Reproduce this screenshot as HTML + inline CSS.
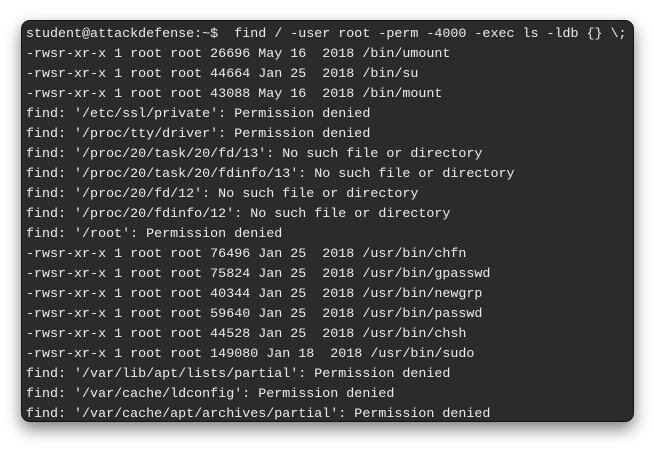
<!DOCTYPE html>
<html><head><meta charset="utf-8"><style>
html,body{margin:0;padding:0;background:#fff;width:655px;height:459px;overflow:hidden}
.win{position:absolute;left:21px;top:20px;width:611px;height:400px;background:#2b2b2b;border:1px solid #111;border-radius:9px;box-shadow:0 7px 16px rgba(0,0,0,0.5);overflow:hidden}
pre{margin:0;position:absolute;left:4px;top:4px;font-family:"Liberation Mono",monospace;font-size:13.35px;line-height:20px;color:#ececec;white-space:pre}
</style></head><body>
<div class="win"><pre>student@attackdefense:~$  find / -user root -perm -4000 -exec ls -ldb {} \;
-rwsr-xr-x 1 root root 26696 May 16  2018 /bin/umount
-rwsr-xr-x 1 root root 44664 Jan 25  2018 /bin/su
-rwsr-xr-x 1 root root 43088 May 16  2018 /bin/mount
find: '/etc/ssl/private': Permission denied
find: '/proc/tty/driver': Permission denied
find: '/proc/20/task/20/fd/13': No such file or directory
find: '/proc/20/task/20/fdinfo/13': No such file or directory
find: '/proc/20/fd/12': No such file or directory
find: '/proc/20/fdinfo/12': No such file or directory
find: '/root': Permission denied
-rwsr-xr-x 1 root root 76496 Jan 25  2018 /usr/bin/chfn
-rwsr-xr-x 1 root root 75824 Jan 25  2018 /usr/bin/gpasswd
-rwsr-xr-x 1 root root 40344 Jan 25  2018 /usr/bin/newgrp
-rwsr-xr-x 1 root root 59640 Jan 25  2018 /usr/bin/passwd
-rwsr-xr-x 1 root root 44528 Jan 25  2018 /usr/bin/chsh
-rwsr-xr-x 1 root root 149080 Jan 18  2018 /usr/bin/sudo
find: '/var/lib/apt/lists/partial': Permission denied
find: '/var/cache/ldconfig': Permission denied
find: '/var/cache/apt/archives/partial': Permission denied</pre></div>
</body></html>
